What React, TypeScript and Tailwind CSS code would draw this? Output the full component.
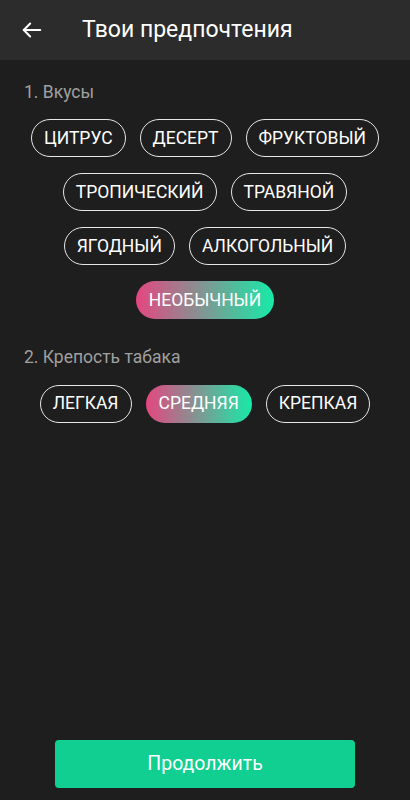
import { useState } from "react";

const FLAVORS = [
  ["ЦИТРУС", "ДЕСЕРТ", "ФРУКТОВЫЙ"],
  ["ТРОПИЧЕСКИЙ", "ТРАВЯНОЙ"],
  ["ЯГОДНЫЙ", "АЛКОГОЛЬНЫЙ"],
  ["НЕОБЫЧНЫЙ"],
];

const STRENGTH = ["ЛЕГКАЯ", "СРЕДНЯЯ", "КРЕПКАЯ"];

function Chip({
  label,
  active,
  onClick,
}: {
  label: string;
  active: boolean;
  onClick: () => void;
}) {
  return (
    <button
      onClick={onClick}
      className={
        active
          ? "h-[38px] px-[13px] rounded-full flex items-center text-[17.5px] text-white bg-linear-to-r/srgb from-[#e4477f] to-[#17eaa8]"
          : "h-[38px] px-[12px] rounded-full flex items-center text-[17.5px] text-white border border-[#e6e6e6]"
      }
    >
      {label}
    </button>
  );
}

export default function App() {
  const [flavor, setFlavor] = useState("НЕОБЫЧНЫЙ");
  const [strength, setStrength] = useState("СРЕДНЯЯ");

  return (
    <div
      className="h-[800px] w-full flex flex-col bg-[#1e1e1e]"
      style={{ fontFamily: "Roboto, 'Noto Sans', sans-serif" }}
    >
      <div className="h-[60px] bg-[#2c2c2c] flex items-center">
        <button className="w-[82px] pl-[21px] flex items-center text-white">
          <svg
            width="22"
            height="22"
            viewBox="0 0 24 24"
            fill="none"
            stroke="currentColor"
            strokeWidth="2.2"
            strokeLinecap="round"
            strokeLinejoin="round"
          >
            <path d="M21 12H3" />
            <path d="M10 5l-7 7 7 7" />
          </svg>
        </button>
        <h1 className="text-white text-[23px] font-normal">Твои предпочтения</h1>
      </div>

      <div className="px-6 pt-[19px]">
        <div className="text-[17.5px] text-[#a0a0a0]">1. Вкусы</div>
        <div className="mt-[14px] flex flex-col gap-[16px]">
          {FLAVORS.map((row, i) => (
            <div key={i} className="flex justify-center gap-[14px]">
              {row.map((f) => (
                <Chip
                  key={f}
                  label={f}
                  active={flavor === f}
                  onClick={() => setFlavor(f)}
                />
              ))}
            </div>
          ))}
        </div>

        <div className="mt-[25px] text-[17.5px] text-[#a0a0a0]">2. Крепость табака</div>
        <div className="mt-[14px] flex justify-center gap-[14px]">
          {STRENGTH.map((s) => (
            <Chip
              key={s}
              label={s}
              active={strength === s}
              onClick={() => setStrength(s)}
            />
          ))}
        </div>
      </div>

      <div className="mt-auto mb-[12px] flex justify-center">
        <button className="w-[300px] h-[48px] rounded-[4px] bg-[#10cf91] text-white text-[19.5px]">
          Продолжить
        </button>
      </div>
    </div>
  );
}
